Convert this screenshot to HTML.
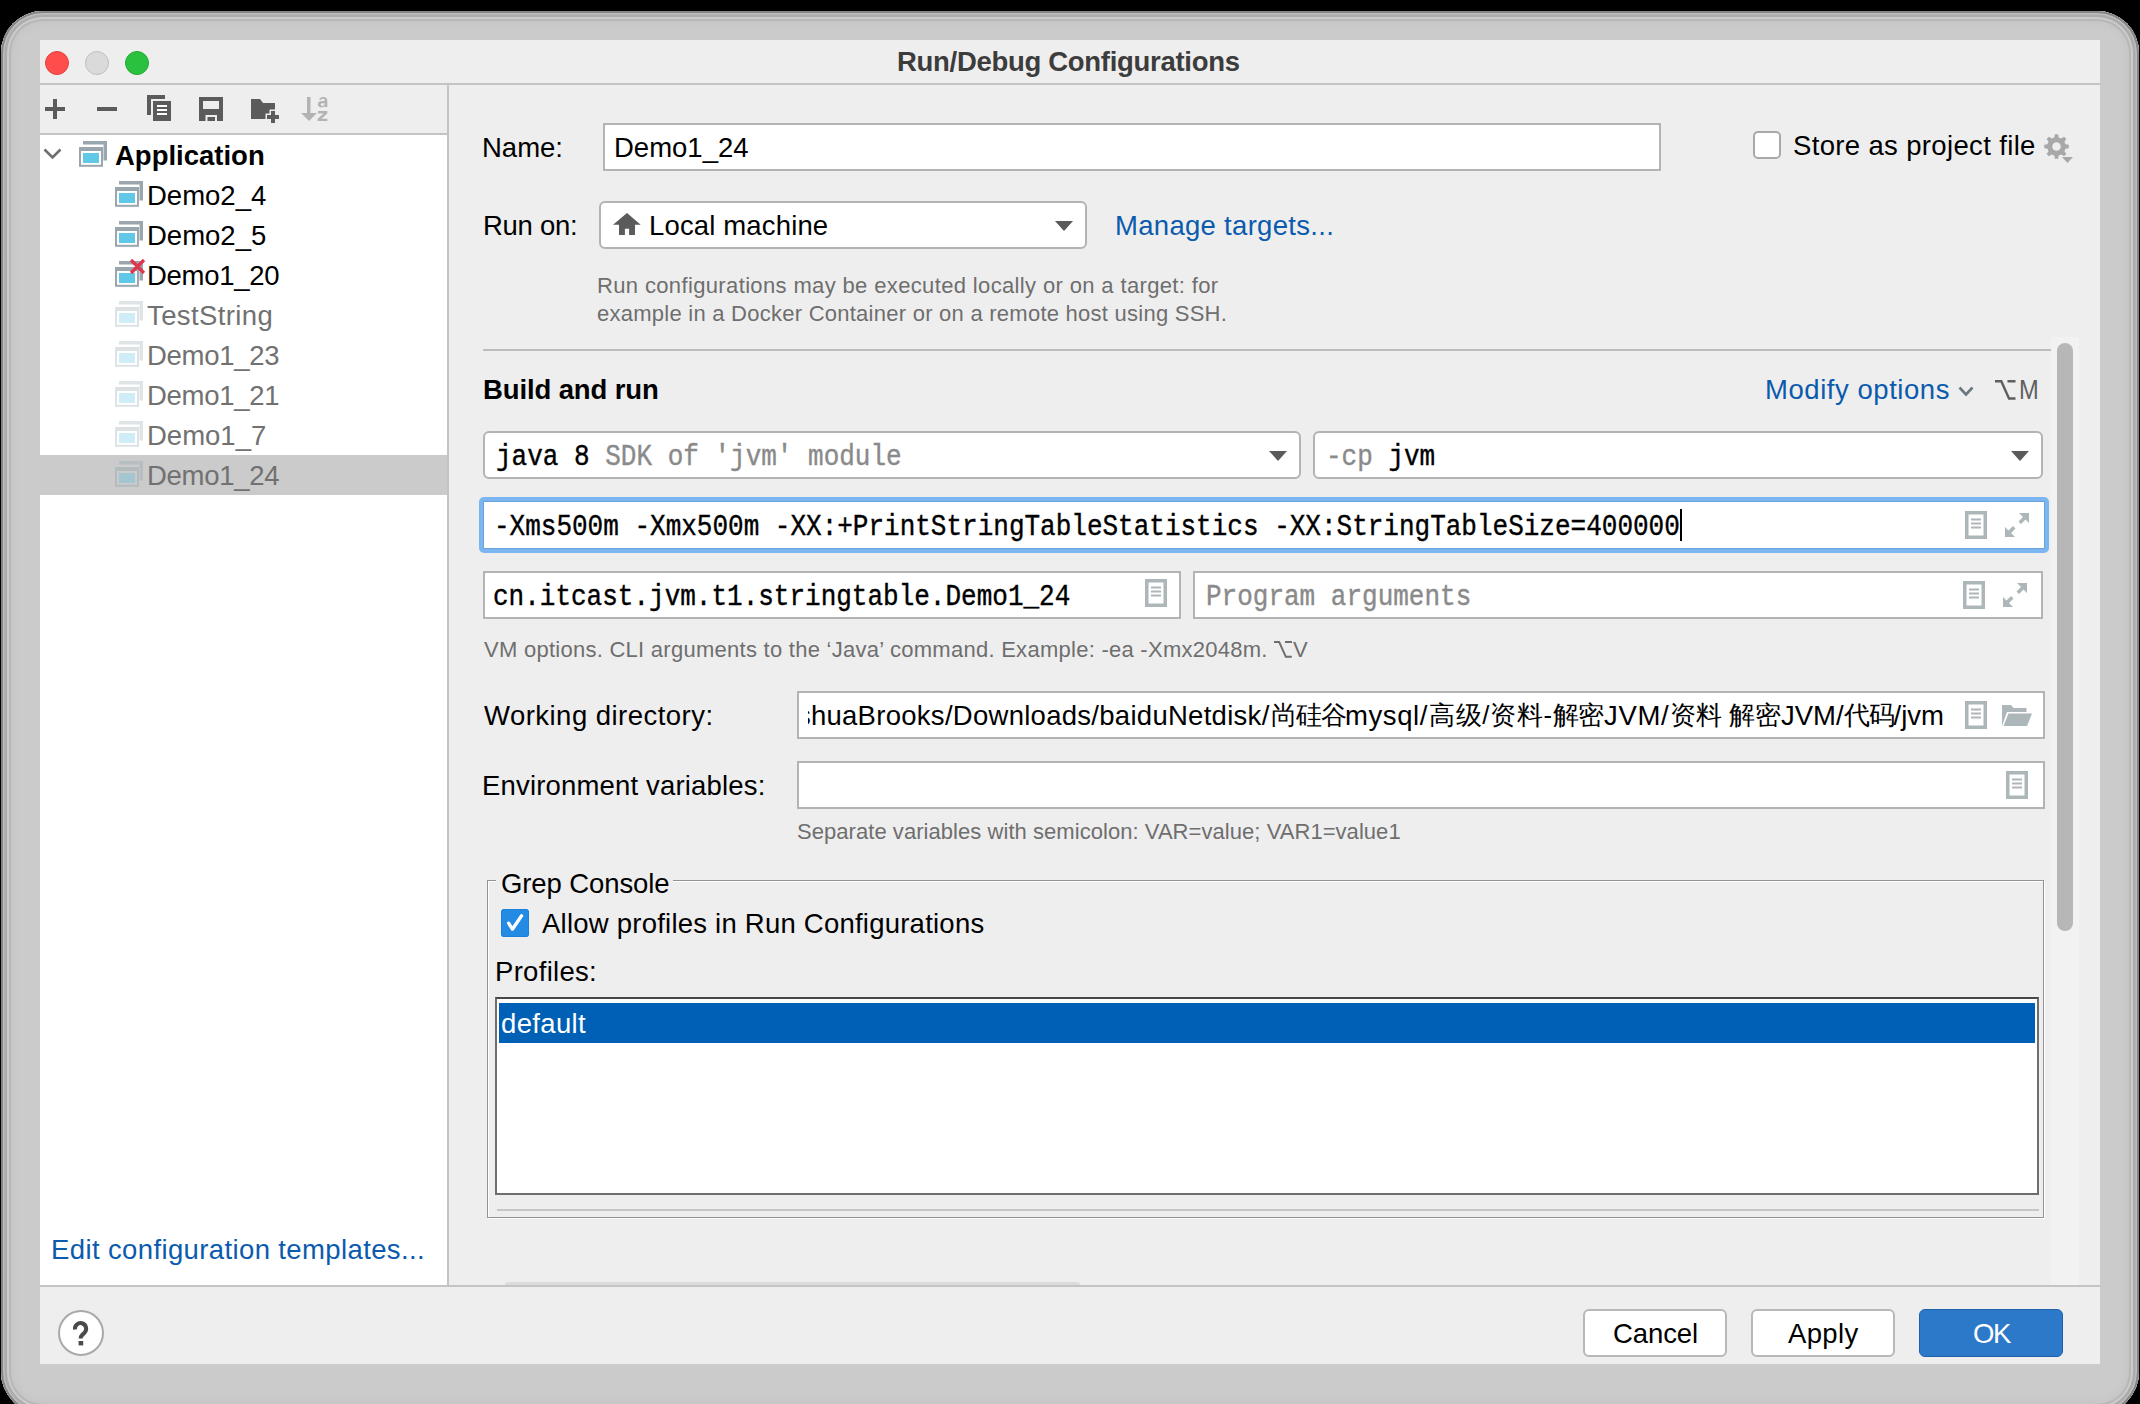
<!DOCTYPE html>
<html><head><meta charset="utf-8">
<style>
*{box-sizing:border-box;margin:0;padding:0}
html,body{width:2140px;height:1404px;overflow:hidden;background:#000}
body{position:relative;font-family:"Liberation Sans",sans-serif;color:#000}
.a{position:absolute}
.frame{position:absolute;left:1px;top:11px;width:2138px;height:1403px;border-radius:42px;background:#cbcbcb;box-shadow:inset 0 0 0 2px #858585,inset 0 0 0 3.5px #bdbdbd,inset 0 0 0 6px #acacac,inset 0 0 0 8px #cbcbcb,inset 0 0 0 10px #b7b7b7,inset 0 0 6px 13px #c5c5c5}
.win{position:absolute;left:40px;top:40px;width:2060px;height:1324px;background:#eeeeee}
.t{position:absolute;font-size:27.5px;white-space:pre;color:#000}
.s{position:absolute;font-size:22px;white-space:pre;color:#6e6e6e}
.m{position:absolute;font-family:"Liberation Mono",monospace;font-size:26px;white-space:pre;color:#000;transform:scaleY(1.13);transform-origin:0 22px;-webkit-text-stroke:0.35px currentColor}
.b{font-weight:bold}
.link{color:#0b5bad}
.g{color:#8a8a8a}
.fld{position:absolute;background:#fff;border:2px solid #b3b3b3}
.dd{position:absolute;background:#fff;border:2px solid #b3b3b3;border-radius:6px}
.tri{position:absolute;width:0;height:0;border-left:9px solid transparent;border-right:9px solid transparent;border-top:10px solid #5a5a5a}
svg{position:absolute;overflow:visible}
</style></head><body>
<div class="frame"></div>
<div class="win"></div>

<!-- ===== title bar ===== -->
<div class="a" style="left:40px;top:83px;width:2060px;height:2px;background:#c4c4c4"></div>
<div class="a" style="left:45px;top:51px;width:24px;height:24px;border-radius:50%;background:#fe4d4a;border:1px solid #e2443f"></div>
<div class="a" style="left:85px;top:51px;width:24px;height:24px;border-radius:50%;background:#dadada;border:1px solid #bfbfbf"></div>
<div class="a" style="left:125px;top:51px;width:24px;height:24px;border-radius:50%;background:#2ac13f;border:1px solid #24a936"></div>
<div class="t b" style="left:897px;top:46px;color:#3c3c3c;letter-spacing:-0.3px">Run/Debug Configurations</div>

<!-- ===== left panel ===== -->
<div class="a" style="left:40px;top:133px;width:407px;height:2px;background:#c4c4c4"></div>
<div class="a" style="left:40px;top:135px;width:407px;height:1150px;background:#fff"></div>
<div class="a" style="left:447px;top:85px;width:2px;height:1200px;background:#c4c4c4"></div>
<div class="a" style="left:40px;top:1285px;width:2060px;height:2px;background:#c4c4c4"></div>

<!-- toolbar icons -->
<svg style="left:0;top:0" width="400" height="140">
  <g fill="#5b5b5b">
    <rect x="45" y="107" width="20" height="4"/><rect x="53" y="99" width="4" height="20"/>
    <rect x="97" y="107" width="20" height="4"/>
    <!-- copy -->
    <rect x="147" y="95" width="18" height="4"/><rect x="147" y="95" width="4" height="20"/>
    <rect x="153" y="101" width="18" height="20"/>
    <!-- save -->
    <path d="M199 97h24v24h-24z M203 101v8h16v-8z M205.5 115v6h11.5v-6z" fill-rule="evenodd"/>
    <rect x="207.5" y="117" width="7.5" height="4"/>
    <!-- folder -->
    <path d="M251 99h9l3 4h12v6.5h-5.5v4h-4v5.5h-14.5z"/>
    <rect x="267" y="115" width="12" height="4"/><rect x="271" y="111" width="4" height="12"/>
  </g>
  <g fill="#fff">
    <rect x="157" y="105" width="10" height="2"/><rect x="157" y="109" width="10" height="2"/><rect x="157" y="113" width="10" height="2"/>
  </g>
  <g fill="#b3b3b3">
    <rect x="307" y="97" width="3.5" height="17"/><path d="M301 113h16l-8 8z"/>
  </g>
  <path d="M319 99.2c1-1.6 2.6-2.3 4.3-2.3c2.6 0 4 1.3 4 3.8v6.3h-2.6v-1.1c-.8 1-1.9 1.4-3.2 1.4c-2.2 0-3.6-1.2-3.6-3.1c0-2.2 1.7-3.3 4.7-3.3h2.1v-.3c0-1.2-.6-1.8-1.7-1.8c-1 0-1.8.4-2.4 1.2z M324.7 103.2h-1.8c-1.5 0-2.2.5-2.2 1.4c0 .8.6 1.3 1.5 1.3c1.4 0 2.5-.9 2.5-2.2z" fill="#b3b3b3"/>
  <path d="M318 111h9.3v2.4l-5.9 5.3h6v2.4h-9.7v-2.4l5.9-5.3h-5.6z" fill="#b3b3b3"/>
</svg>

<!-- tree -->
<div class="a" style="left:40px;top:455px;width:407px;height:40px;background:#cbcbcb"></div>
<svg style="left:0;top:0" width="450" height="500">
  <defs>
    <g id="appic">
      <path d="M4 0h24v19.5h-3.5v-16h-20.5z" fill="#9aa6ae"/>
      <rect x="1" y="7" width="22" height="17.8" fill="#fff" stroke="#9aa6ae" stroke-width="2"/>
      <rect x="0" y="6" width="24" height="4" fill="#9aa6ae"/>
      <rect x="4" y="12" width="16" height="10" fill="#62c8e8"/>
    </g>
    <g id="appicd">
      <path d="M4 0h24v19.5h-3.5v-16h-20.5z" fill="#dfe4e7"/>
      <rect x="1" y="7" width="22" height="17.8" fill="#fff" stroke="#dde2e5" stroke-width="2"/>
      <rect x="0" y="6" width="24" height="4" fill="#dde2e5"/>
      <rect x="4" y="12" width="16" height="10" fill="#cfedf7"/>
    </g>
    <g id="appics">
      <path d="M4 0h24v19.5h-3.5v-16h-20.5z" fill="#b7bec2"/>
      <rect x="1" y="7" width="22" height="17.8" fill="#cbcbcb" stroke="#b4bbbf" stroke-width="2"/>
      <rect x="0" y="6" width="24" height="4" fill="#b4bbbf"/>
      <rect x="4" y="12" width="16" height="10" fill="#a3c6d1"/>
    </g>
  </defs>
  <path d="M44.5 149.5l8 8l8 -8" fill="none" stroke="#6e6e6e" stroke-width="2.6"/>
  <use href="#appic" x="79" y="141"/>
  <use href="#appic" x="115" y="181"/>
  <use href="#appic" x="115" y="221"/>
  <use href="#appic" x="115" y="261"/>
  <path d="M131 260l13 13M144 260l-13 13" stroke="#e0364c" stroke-width="3.2"/>
  <use href="#appicd" x="115" y="301"/>
  <use href="#appicd" x="115" y="341"/>
  <use href="#appicd" x="115" y="381"/>
  <use href="#appicd" x="115" y="421"/>
  <use href="#appics" x="115" y="461"/>
</svg>
<div class="t b" style="left:115px;top:140px">Application</div>
<div class="t" style="left:147px;top:180px">Demo2_4</div>
<div class="t" style="left:147px;top:220px">Demo2_5</div>
<div class="t" style="left:147px;top:260px;letter-spacing:-0.3px">Demo1_20</div>
<div class="t" style="left:147px;top:300px;color:#717171;letter-spacing:0.38px">TestString</div>
<div class="t" style="left:147px;top:340px;color:#717171;letter-spacing:-0.3px">Demo1_23</div>
<div class="t" style="left:147px;top:380px;color:#717171;letter-spacing:-0.3px">Demo1_21</div>
<div class="t" style="left:147px;top:420px;color:#717171">Demo1_7</div>
<div class="t" style="left:147px;top:460px;color:#717171;letter-spacing:-0.3px">Demo1_24</div>
<div class="t link" style="left:51px;top:1234px;letter-spacing:0.38px">Edit configuration templates...</div>

<!-- ===== right panel ===== -->
<div class="t" style="left:482px;top:132px">Name:</div>
<div class="fld" style="left:603px;top:123px;width:1058px;height:48px"></div>
<div class="t" style="left:614px;top:132px">Demo1_24</div>

<div class="a" style="left:1753px;top:131px;width:28px;height:28px;border:2px solid #a9a9a9;border-radius:5px;background:#fff"></div>
<div class="t" style="left:1793px;top:130px;letter-spacing:0.35px">Store as project file</div>
<svg style="left:2044px;top:134px" width="30" height="30">
  <path fill="#a8a8a8" fill-rule="evenodd" d="M21.54 10.33 L24.79 10.85 L24.79 14.15 L21.54 14.67 L20.43 17.36 L22.36 20.02 L20.02 22.36 L17.36 20.43 L14.67 21.54 L14.15 24.79 L10.85 24.79 L10.33 21.54 L7.64 20.43 L4.98 22.36 L2.64 20.02 L4.57 17.36 L3.46 14.67 L0.21 14.15 L0.21 10.85 L3.46 10.33 L4.57 7.64 L2.64 4.98 L4.98 2.64 L7.64 4.57 L10.33 3.46 L10.85 0.21 L14.15 0.21 L14.67 3.46 L17.36 4.57 L20.02 2.64 L22.36 4.98 L20.43 7.64Z M16.80 12.50 A4.3 4.3 0 1 0 8.20 12.50 A4.3 4.3 0 1 0 16.80 12.50Z"/>
  <path d="M17.5 22.5h12l-6 6z" fill="#efefef"/>
  <path d="M18 23h11l-5.5 6z" fill="#a8a8a8"/>
</svg>

<div class="t" style="left:483px;top:210px;letter-spacing:-0.3px">Run on:</div>
<div class="dd" style="left:599px;top:201px;width:488px;height:48px"></div>
<svg style="left:613px;top:213px" width="28" height="22"><path d="M14 0L27.7 11.8H22V22H16.1V15.7H11.9V22H6V11.8H0z" fill="#5b5b5b"/></svg>
<div class="t" style="left:649px;top:210px;letter-spacing:0.15px">Local machine</div>
<div class="tri" style="left:1055px;top:221px"></div>
<div class="t link" style="left:1115px;top:210px;letter-spacing:0.3px">Manage targets...</div>

<div class="s" style="left:597px;top:273px;letter-spacing:0.36px">Run configurations may be executed locally or on a target: for</div>
<div class="s" style="left:597px;top:301px;letter-spacing:0.25px">example in a Docker Container or on a remote host using SSH.</div>

<div class="a" style="left:483px;top:349px;width:1568px;height:2px;background:#bdbdbd"></div>
<!-- scrollbar -->
<div class="a" style="left:2051px;top:337px;width:28px;height:948px;background:#f2f2f2"></div>
<div class="a" style="left:2057px;top:343px;width:16px;height:588px;border-radius:8px;background:#b7b7b7"></div>

<div class="t b" style="left:483px;top:374px;letter-spacing:-0.12px">Build and run</div>
<div class="t link" style="left:1765px;top:374px;letter-spacing:0.55px">Modify options</div>
<svg style="left:1958px;top:386px" width="18" height="12"><path d="M1.5 1.5l6.5 7l6.5-7" fill="none" stroke="#6c7980" stroke-width="2.6"/></svg>
<svg style="left:1995px;top:380px" width="22" height="20"><path d="M0 1.2h6.3l7.7 17.3h6.5M12.5 1.2h8" fill="none" stroke="#5f5f5f" stroke-width="2.4"/></svg>
<div class="t" style="left:2019px;top:374px;color:#5f5f5f;transform:scaleX(0.86);transform-origin:0 0">M</div>

<div class="dd" style="left:483px;top:431px;width:818px;height:48px"></div>
<div class="m" style="left:496px;top:443px">java 8 <span class="g">SDK of 'jvm' module</span></div>
<div class="tri" style="left:1269px;top:451px"></div>
<div class="dd" style="left:1313px;top:431px;width:730px;height:48px"></div>
<div class="m" style="left:1326px;top:443px"><span class="g">-cp</span> jvm</div>
<div class="tri" style="left:2011px;top:451px"></div>

<!-- VM options focused -->
<div class="a" style="left:479px;top:497px;width:1570px;height:56px;border-radius:5px;background:#7cb6f0"></div>
<div class="a" style="left:484px;top:502px;width:1560px;height:46px;background:#fff;box-shadow:0 0 0 1px #6aa2dc"></div>
<div class="m" style="left:494px;top:513px">-Xms500m -Xmx500m -XX:+PrintStringTableStatistics -XX:StringTableSize=400000</div>
<div class="a" style="left:1680px;top:509px;width:2px;height:32px;background:#000"></div>

<svg style="left:0;top:0" width="2100" height="820">
  <defs>
    <g id="doc">
      <rect x="1.75" y="1.75" width="18.5" height="24.5" fill="none" stroke="#adb6b9" stroke-width="3.5"/>
      <rect x="6" y="7.5" width="10" height="2" fill="#adb6b9"/>
      <rect x="6" y="11.5" width="10" height="2" fill="#adb6b9"/>
      <rect x="6" y="15.5" width="10" height="2" fill="#adb6b9"/>
    </g>
    <g id="exp">
      <path d="M14 0h10v10l-3.5-3.5-4.5 4.5-2.5-2.5 4.5-4.5z" fill="#adb6b9"/>
      <path d="M10 24h-10v-10l3.5 3.5 4.5-4.5 2.5 2.5-4.5 4.5z" fill="#adb6b9"/>
    </g>
  </defs>
  <use href="#doc" x="1965" y="511"/>
  <use href="#exp" x="2005" y="513"/>
  <use href="#doc" x="1145" y="579"/>
  <use href="#doc" x="1963" y="581"/>
  <use href="#exp" x="2003" y="583"/>
  <use href="#doc" x="1965" y="701"/>
  <use href="#doc" x="2006" y="771"/>
</svg>

<div class="fld" style="left:483px;top:571px;width:698px;height:48px"></div>
<div class="m" style="left:493px;top:583px">cn.itcast.jvm.t1.stringtable.Demo1_24</div>
<div class="fld" style="left:1193px;top:571px;width:850px;height:48px"></div>
<div class="m g" style="left:1206px;top:583px;color:#8a8a8a">Program arguments</div>
<svg style="left:0;top:0" width="2100" height="820">
  <use href="#doc" x="1145" y="579"/>
  <use href="#doc" x="1963" y="581"/>
  <use href="#exp" x="2003" y="583"/>
</svg>

<div class="s" style="left:484px;top:637px;letter-spacing:0.265px">VM options. CLI arguments to the ‘Java’ command. Example: -ea -Xmx2048m.</div>
<svg style="left:1274px;top:641px" width="20" height="17"><path d="M0 1h5.2l6.6 14.7h6M11 1h7" fill="none" stroke="#6e6e6e" stroke-width="1.9"/></svg>
<div class="s" style="left:1293px;top:637px">V</div>

<div class="t" style="left:484px;top:700px;letter-spacing:0.47px">Working directory:</div>
<div class="fld" style="left:797px;top:691px;width:1248px;height:48px"></div>
<div class="a" style="left:808px;top:693px;width:1144px;height:44px;overflow:hidden">
  <div class="t" style="left:-11.1px;top:7px;line-height:31px;font-size:27.5px;letter-spacing:0px">s</div>
  <div class="t" style="left:2.9px;top:7px;line-height:31px;font-size:27.5px;letter-spacing:0.28px">huaBrooks/Downloads/baiduNetdisk/</div>
  <div class="t" style="left:462.5px;top:7px;line-height:31px;font-size:25.5px;letter-spacing:-0.83px">尚硅谷</div>
  <div class="t" style="left:537.0px;top:7px;line-height:31px;font-size:27.5px;letter-spacing:0.58px">mysql/</div>
  <div class="t" style="left:621.0px;top:7px;line-height:31px;font-size:25.5px;letter-spacing:0.6px">高级/</div>
  <div class="t" style="left:682.0px;top:7px;line-height:31px;font-size:25.5px;letter-spacing:0.7px">资料-</div>
  <div class="t" style="left:744.7px;top:7px;line-height:31px;font-size:25.5px;letter-spacing:-0.3px">解密</div>
  <div class="t" style="left:796.0px;top:7px;line-height:31px;font-size:27.5px;letter-spacing:0.7px">JVM/</div>
  <div class="t" style="left:861.6px;top:7px;line-height:31px;font-size:25.5px;letter-spacing:0px">资料 </div>
  <div class="t" style="left:920.7px;top:7px;line-height:31px;font-size:25.5px;letter-spacing:0px">解密</div>
  <div class="t" style="left:973.0px;top:7px;line-height:31px;font-size:27.5px;letter-spacing:0px">JVM/</div>
  <div class="t" style="left:1035.8px;top:7px;line-height:31px;font-size:25.5px;letter-spacing:-0.8px">代码</div>
  <div class="t" style="left:1085.5px;top:7px;line-height:31px;font-size:27.5px;letter-spacing:0px">/jvm</div>
</div>

<div class="t" style="left:482px;top:770px;letter-spacing:0.17px">Environment variables:</div>
<div class="fld" style="left:797px;top:761px;width:1248px;height:48px"></div>

<div class="s" style="left:797px;top:819px;letter-spacing:0.05px">Separate variables with semicolon: VAR=value; VAR1=value1</div>

<svg style="left:0;top:0" width="2100" height="820">
  <use href="#doc" x="1965" y="701"/>
  <use href="#folder" x="2002" y="703"/>
  <use href="#doc" x="2006" y="771"/>
  <defs>
    <g id="folder">
      <path d="M0 2h9l2.5 3h13v4h-19.5l-5 14z" fill="#adb6b9"/>
      <path d="M6.5 10.5h23.5l-5 12.5h-23.5z" fill="#adb6b9"/>
    </g>
  </defs>
</svg>

<!-- Grep console group -->
<div class="a" style="left:487px;top:880px;width:1557px;height:338px;border:1px solid #939393;box-shadow:1px 1px 0 #fff, inset 1px 1px 0 #fff"></div>
<div class="a" style="left:496px;top:870px;width:177px;height:20px;background:#eeeeee"></div>
<div class="t" style="left:501px;top:868px;letter-spacing:-0.1px">Grep Console</div>

<div class="a" style="left:501px;top:909px;width:28px;height:28px;border-radius:3.5px;background:#238be3;box-shadow:inset 0 0 0 1px #1a80da"></div>
<svg style="left:501px;top:909px" width="28" height="28"><path d="M7.6 14.2L11.4 20.2L20.6 6.8" fill="none" stroke="#fff" stroke-width="3.3" stroke-linecap="round" stroke-linejoin="round"/></svg>
<div class="t" style="left:542px;top:908px;letter-spacing:0.23px">Allow profiles in Run Configurations</div>

<div class="t" style="left:495px;top:956px;letter-spacing:0.3px">Profiles:</div>
<div class="a" style="left:495px;top:997px;width:1544px;height:198px;background:#fff;border:2px solid #6e6e6e;border-top-color:#474747"></div>
<div class="a" style="left:499px;top:1003px;width:1536px;height:40px;background:#0060b6"></div>
<div class="t" style="left:501px;top:1008px;color:#fff;letter-spacing:0.35px">default</div>
<div class="a" style="left:497px;top:1209px;width:1542px;height:2px;background:#c6c6c6"></div>

<!-- faint element under group -->
<div class="a" style="left:505px;top:1282px;width:575px;height:3px;border-radius:3px 3px 0 0;background:#dcdcdc"></div>

<!-- ===== bottom bar ===== -->
<div class="a" style="left:58px;top:1310px;width:46px;height:46px;border-radius:50%;background:#fff;border:2px solid #a9a9a9"></div>
<svg style="left:58px;top:1310px" width="46" height="46"><path d="M17 19.5A5.6 5.6 0 1 1 26.8 22.3L24.2 25Q22.6 26.6 22.6 28.6" fill="none" stroke="#4a4a4a" stroke-width="4"/><rect x="20.6" y="31" width="4.6" height="4.4" fill="#4a4a4a"/></svg>

<div class="a" style="left:1583px;top:1309px;width:144px;height:48px;border-radius:6px;background:#fff;border:2px solid #b8b8b8"></div>
<div class="t" style="left:1613px;top:1318px;letter-spacing:-0.1px">Cancel</div>
<div class="a" style="left:1751px;top:1309px;width:144px;height:48px;border-radius:6px;background:#fff;border:2px solid #b8b8b8"></div>
<div class="t" style="left:1788px;top:1318px;letter-spacing:0.35px">Apply</div>
<div class="a" style="left:1919px;top:1309px;width:144px;height:48px;border-radius:6px;background:#2d79c9;border:1.5px solid #1f61a9"></div>
<div class="t" style="left:1973px;top:1318px;color:#fff;letter-spacing:-1.5px">OK</div>

</body></html>
